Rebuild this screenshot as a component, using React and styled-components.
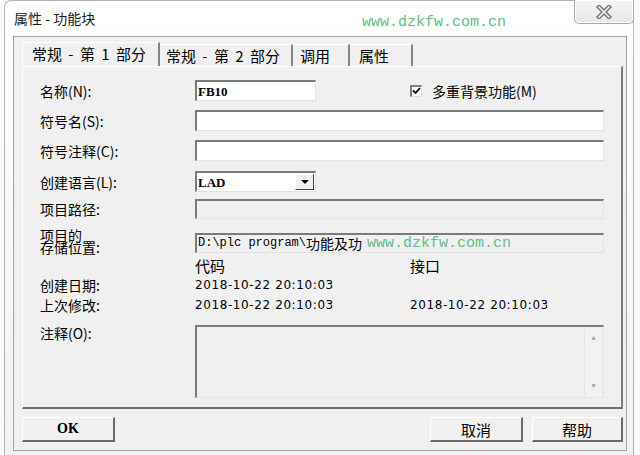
import React from 'react'
import styled, { createGlobalStyle } from 'styled-components'

const GlobalStyle = createGlobalStyle`
    html, body {
        margin: 0;
        padding: 0;
        background: #fafafa;
    }
    * {
        box-sizing: border-box;
    }
`

const cjk = `'Noto Sans CJK SC', 'Noto Sans', sans-serif`
const mono = `'Liberation Mono', 'Noto Sans CJK SC', monospace`

const Window = styled.div`
    width: 640px;
    height: 455px;
    padding: 0 6px 0 4px;
    background: #fafafa;
    display: flex;
    font-family: ${cjk};
    color: #000;
`
const Frame = styled.div`
    flex: 1;
    display: flex;
    flex-direction: column;
    border: 1px solid #b4b4b4;
    border-bottom: none;
    border-radius: 7px 7px 0 0;
    background: linear-gradient(180deg, #ffffff 0%, #f7f7f7 60%, #f2f2f2 100%);
    padding: 0 6px 4px 8px;
`
const TitleBar = styled.div`
    height: 35px;
    display: flex;
    justify-content: space-between;
    align-items: flex-start;
    position: relative;
`
const Title = styled.div`
    font-size: 14px;
    line-height: 16px;
    margin-top: 9px;
    padding-left: 1px;
    color: #1a1a1a;
`
const Watermark = styled.div`
    position: absolute;
    left: ${props => props.$x}px;
    top: ${props => props.$y}px;
    font-family: ${mono};
    font-size: 15px;
    line-height: 16px;
    color: #62bd8b;
    white-space: pre;
    pointer-events: none;
`
const CloseButton = styled.div`
    width: 60px;
    height: 24px;
    margin-right: -7px;
    margin-top: -1px;
    border: 1px solid #a8a8a8;
    border-top: none;
    border-radius: 0 0 5px 5px;
    background: linear-gradient(180deg, #f4f4f4, #e6e6e6);
    display: flex;
    align-items: center;
    justify-content: center;
    box-shadow: inset 0 0 0 1px #fff;
`
const Client = styled.div`
    flex: 1;
    background: #f0f0f0;
    border: 1px solid #a3a3a3;
    padding: 5px 3px 8px 8px;
    display: flex;
    flex-direction: column;
`
const TabRow = styled.div`
    display: flex;
    height: 24px;
`
const Tab = styled.div`
    width: ${props => props.$w}px;
    height: ${props => (props.$active ? 24 : 22)}px;
    margin-top: ${props => (props.$active ? 0 : 2)}px;
    padding-left: ${props => props.$pad}px;
    font-size: 15px;
    line-height: 22px;
    word-spacing: 3px;
    white-space: pre;
    border-top: 1px solid #fff;
    border-left: ${props => (props.$active ? '1px solid #fff' : 'none')};
    border-right: 2px solid #858585;
    background: #f0f0f0;
`
const Panel = styled.div`
    height: 343px;
    border-top: 1px solid #fff;
    border-left: 1px solid #fff;
    border-right: 2px solid #7c7c7c;
    border-bottom: 2px solid #6e6e6e;
    padding: 13px 17px 0 17px;
    display: flex;
    flex-direction: column;
`
const Row = styled.div`
    display: grid;
    grid-template-columns: 155px 1fr;
    align-items: ${props => props.$align || 'center'};
    height: ${props => props.$h}px;
    margin-top: ${props => props.$mt || 0}px;
`
const Label = styled.div`
    font-size: 14px;
    line-height: ${props => props.$lh || 16}px;
    align-self: ${props => props.$self || 'center'};
    white-space: pre;
    text-align: left;
`
const Split = styled.div`
    display: grid;
    grid-template-columns: 215px 1fr;
    align-items: center;
    height: 100%;
`
const Input = styled.div`
    width: ${props => (props.$w ? props.$w + 'px' : '100%')};
    height: ${props => props.$h || 21}px;
    background: ${props => (props.$disabled ? '#f0f0f0' : '#fff')};
    border-top: 2px solid #7a7a7a;
    border-left: 2px solid #7a7a7a;
    border-right: 1px solid #e3e3e3;
    border-bottom: 1px solid #e3e3e3;
    font-family: ${mono};
    font-size: 12px;
    line-height: 17px;
    padding-left: 1px;
    display: flex;
    align-items: center;
    white-space: pre;
    position: relative;
`
const FieldText = styled.span`
    font-family: ${props => (props.$serif ? `'Liberation Serif', serif` : mono)};
    font-weight: ${props => (props.$serif ? 700 : 400)};
    font-size: ${props => props.$size || 12}px;
`
const CjkText = styled.span`
    font-family: ${cjk};
    font-size: 14px;
`
const DropButton = styled.div`
    position: absolute;
    right: 1px;
    top: 1px;
    width: 19px;
    height: 16px;
    background: #f0f0f0;
    border-top: 1px solid #fff;
    border-left: 1px solid #fff;
    border-right: 1px solid #404040;
    border-bottom: 1px solid #404040;
    display: flex;
    align-items: center;
    justify-content: center;
`
const Triangle = styled.div`
    width: 0;
    height: 0;
    border-left: 4px solid transparent;
    border-right: 4px solid transparent;
    border-top: 4px solid #000;
`
const CheckWrap = styled.div`
    display: flex;
    align-items: center;
    gap: 10px;
    font-size: 14px;
`
const CheckBox = styled.div`
    width: 12px;
    height: 12px;
    background: #fff;
    border-top: 2px solid #808080;
    border-left: 2px solid #808080;
    border-right: 1px solid #dcdcdc;
    border-bottom: 1px solid #dcdcdc;
    display: flex;
    align-items: center;
    justify-content: center;
`
const Heading = styled.div`
    font-size: 15px;
    line-height: 18px;
`
const DateText = styled.div`
    font-family: 'DejaVu Sans', sans-serif;
    font-size: 12px;
    letter-spacing: 0.6px;
    line-height: 16px;
`
const TextArea = styled(Input)`
    height: 73px;
    background: #f0f0f0;
    justify-content: flex-end;
    align-items: stretch;
    padding: 1px 1px 1px 0;
`
const ScrollBar = styled.div`
    width: 18px;
    display: flex;
    flex-direction: column;
    justify-content: space-between;
    align-items: center;
    padding: 6px 0;
    background: #f2f2f2;
    border-left: 1px solid #e6e6e6;
    color: #a0a0a0;
    font-size: 7px;
    line-height: 8px;
`
const ButtonRow = styled.div`
    display: flex;
    margin-top: 8px;
    gap: 9px;
`
const Button = styled.div`
    width: ${props => props.$w}px;
    height: 25px;
    margin-left: ${props => (props.$push ? 'auto' : 0)};
    border-top: 1px solid #fff;
    border-left: 1px solid #fff;
    border-right: 2px solid #6a6a6a;
    border-bottom: 2px solid #6a6a6a;
    background: #f0f0f0;
    display: flex;
    align-items: center;
    justify-content: center;
    font-size: ${props => (props.$latin ? 14 : 15)}px;
    font-family: ${props => (props.$latin ? `'Liberation Serif', serif` : cjk)};
    font-weight: ${props => (props.$latin ? 700 : 400)};
`

const CloseIcon = () => (
    <svg width="18" height="14" viewBox="0 0 18 14">
        <path d="M4 2 L14 12 M14 2 L4 12" stroke="#6b6b6b" strokeWidth="4.2" strokeLinecap="square" />
        <path d="M4 2 L14 12 M14 2 L4 12" stroke="#f2f2f2" strokeWidth="1.6" strokeLinecap="square" />
    </svg>
)

const CheckMark = () => (
    <svg width="9" height="8" viewBox="0 0 9 8">
        <path d="M1 3.5 L3.5 6 L8 1" stroke="#000" strokeWidth="1.8" fill="none" />
    </svg>
)

function App() {
    return (
        <>
            <GlobalStyle />
            <Window>
                <Frame>
                    <TitleBar>
                        <Title>属性 - 功能块</Title>
                        <Watermark $x={349} $y={14}>www.dzkfw.com.cn</Watermark>
                        <CloseButton>
                            <CloseIcon />
                        </CloseButton>
                    </TitleBar>
                    <Client>
                        <TabRow>
                            <Tab $active $w={138} $pad={9}>常规 - 第 1 部分</Tab>
                            <Tab $w={133} $pad={6}>常规 - 第 2 部分</Tab>
                            <Tab $w={57} $pad={7}>调用</Tab>
                            <Tab $w={63} $pad={9}>属性</Tab>
                        </TabRow>
                        <Panel>
                            <Row $h={21}>
                                <Label>名称(N):</Label>
                                <Split>
                                    <Input $w={121}>
                                        <FieldText $serif $size={13}>FB10</FieldText>
                                    </Input>
                                    <CheckWrap>
                                        <CheckBox>
                                            <CheckMark />
                                        </CheckBox>
                                        多重背景功能(M)
                                    </CheckWrap>
                                </Split>
                            </Row>
                            <Row $h={21} $mt={9}>
                                <Label>符号名(S):</Label>
                                <Input />
                            </Row>
                            <Row $h={21} $mt={9}>
                                <Label>符号注释(C):</Label>
                                <Input />
                            </Row>
                            <Row $h={21} $mt={10}>
                                <Label>创建语言(L):</Label>
                                <Input $w={121}>
                                    <FieldText $serif $size={13}>LAD</FieldText>
                                    <DropButton>
                                        <Triangle />
                                    </DropButton>
                                </Input>
                            </Row>
                            <Row $h={20} $mt={7}>
                                <Label>项目路径:</Label>
                                <Input $h={20} $disabled />
                            </Row>
                            <Row $h={20} $mt={10} $align="end">
                                <Label $lh={12} $self="end">{'项目的\n存储位置:'}</Label>
                                <Input $h={20} $disabled>
                                    <FieldText>D:\plc program\</FieldText>
                                    <CjkText>功能及功</CjkText>
                                    <Watermark $x={170} $y={1}>www.dzkfw.com.cn</Watermark>
                                </Input>
                            </Row>
                            <Row $h={18} $mt={8}>
                                <span />
                                <Split>
                                    <Heading>代码</Heading>
                                    <Heading>接口</Heading>
                                </Split>
                            </Row>
                            <Row $h={20}>
                                <Label>创建日期:</Label>
                                <Split>
                                    <DateText>2018-10-22 20:10:03</DateText>
                                    <span />
                                </Split>
                            </Row>
                            <Row $h={20}>
                                <Label>上次修改:</Label>
                                <Split>
                                    <DateText>2018-10-22 20:10:03</DateText>
                                    <DateText>2018-10-22 20:10:03</DateText>
                                </Split>
                            </Row>
                            <Row $h={73} $mt={10} $align="start">
                                <Label $self="start">注释(O):</Label>
                                <TextArea>
                                    <ScrollBar>
                                        <span>▲</span>
                                        <span>▼</span>
                                    </ScrollBar>
                                </TextArea>
                            </Row>
                        </Panel>
                        <ButtonRow>
                            <Button $w={93} $latin>OK</Button>
                            <Button $w={93} $push>取消</Button>
                            <Button $w={91}>帮助</Button>
                        </ButtonRow>
                    </Client>
                </Frame>
            </Window>
        </>
    )
}

export default App
